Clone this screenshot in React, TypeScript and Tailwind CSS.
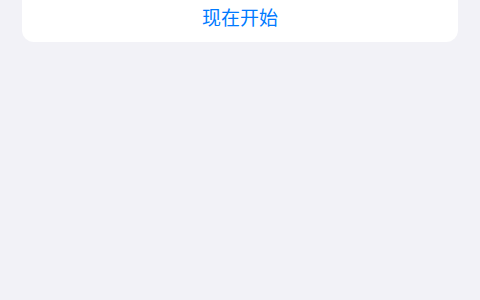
export default function App() {
  return (
    <div className="min-h-[300px] w-[480px] bg-[#f2f2f7] px-[22px]" style={{ fontFamily: '"Noto Sans CJK SC", "Liberation Sans", sans-serif' }}>
      <div className="flex h-[42px] items-start justify-center rounded-b-[12px] bg-white">
        <button type="button" className="mt-[4px] text-[19px] leading-[26px] text-[#007aff]">
          现在开始
        </button>
      </div>
    </div>
  );
}
